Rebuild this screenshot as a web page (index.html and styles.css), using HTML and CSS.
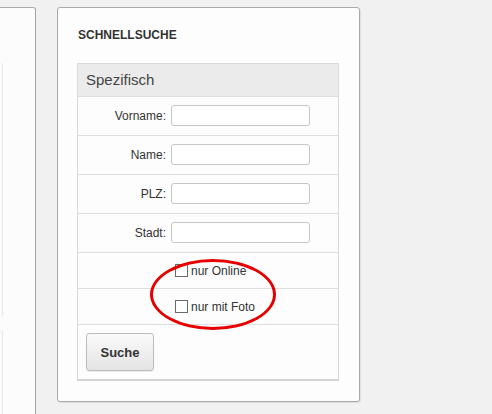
FILE: index.html
```html
<!DOCTYPE html>
<html lang="de">
<head>
<meta charset="utf-8">
<title>Schnellsuche</title>
<link rel="stylesheet" href="styles.css">
</head>
<body>
<div class="page">
  <aside class="side">
    <div class="side-box side-box-1"></div>
    <div class="side-box side-box-2"></div>
  </aside>
  <section class="panel">
    <h2 class="title">SCHNELLSUCHE</h2>
    <div class="table">
      <div class="thead">Spezifisch</div>
      <div class="row">
        <label class="lbl">Vorname:</label>
        <span class="input"></span>
      </div>
      <div class="row">
        <label class="lbl">Name:</label>
        <span class="input"></span>
      </div>
      <div class="row">
        <label class="lbl">PLZ:</label>
        <span class="input"></span>
      </div>
      <div class="row">
        <label class="lbl">Stadt:</label>
        <span class="input"></span>
      </div>
      <div class="row check-row">
        <span class="lbl"></span>
        <span class="check"><span class="box"></span>nur Online</span>
      </div>
      <div class="row check-row">
        <span class="lbl"></span>
        <span class="check"><span class="box"></span>nur mit Foto</span>
      </div>
      <div class="row btn-row">
        <button class="btn">Suche</button>
      </div>
    </div>
    <div class="mark"></div>
  </section>
</div>
</body>
</html>
```
FILE: styles.css
```css
html, body {
  margin: 0;
  padding: 0;
}
body {
  background: #f1f1f1;
  font-family: "Liberation Sans", Arial, sans-serif;
  color: #333;
  overflow: hidden;
}
.page {
  display: flex;
  align-items: flex-start;
  gap: 21px;
  padding-top: 7px;
  height: 414px;
  box-sizing: border-box;
}
.side {
  width: 36px;
  height: 420px;
  box-sizing: border-box;
  background: #fcfcfc;
  border-top: 1px solid #ababab;
  border-right: 1px solid #a3a3a3;
  border-top-right-radius: 3px;
  padding-top: 55px;
  display: flex;
  flex-direction: column;
  gap: 14px;
}
.side-box {
  width: 2px;
  border-right: 1px solid #e6e6e6;
  border-top-right-radius: 3px;
  border-bottom-right-radius: 3px;
}
.side-box-1 { height: 260px; }
.side-box-2 { height: 100px; }

.panel {
  position: relative;
  width: 303px;
  height: 395px;
  box-sizing: border-box;
  background: #fdfdfd;
  border: 1px solid #a9a9a9;
  border-radius: 3px;
  box-shadow: 1px 1px 1px rgba(0,0,0,0.08);
  padding: 20px 19px 0 19px;
}
.title {
  margin: 0 0 21px 1px;
  font-size: 12px;
  line-height: 14px;
  font-weight: bold;
  color: #333;
}
.table {
  width: 262px;
  box-sizing: border-box;
  border: 1px solid #d9d9d9;
  border-bottom: 2px solid #d4d4d4;
}
.thead {
  height: 32px;
  background: #ebebeb;
  padding-left: 8px;
  font-size: 15px;
  line-height: 32px;
  color: #444;
}
.row {
  display: flex;
  align-items: center;
  height: 38px;
  border-top: 1px solid #dedede;
}
.lbl {
  width: 88px;
  flex: none;
  text-align: right;
  font-size: 12px;
  color: #333;
  margin-right: 5px;
}
.input {
  display: block;
  width: 139px;
  height: 21px;
  box-sizing: border-box;
  background: #fff;
  border: 1px solid #c6c6c6;
  border-radius: 3px;
  margin-top: -1px;
}
.check-row {
  height: 35px;
}
.check {
  display: flex;
  align-items: center;
  font-size: 12px;
  color: #333;
}
.box {
  display: block;
  width: 13px;
  height: 13px;
  box-sizing: border-box;
  border: 1px solid #6a6a6a;
  background: #fff;
  margin: 0 3px 0 4px;
}
.btn-row {
  height: 54px;
  align-items: flex-start;
  padding-left: 8px;
}
.btn {
  margin-top: 8px;
  width: 68px;
  height: 38px;
  font-family: "Liberation Sans", Arial, sans-serif;
  font-size: 13px;
  font-weight: bold;
  color: #333;
  background: linear-gradient(#fafafa, #e4e4e4);
  border: 1px solid #bcbcbc;
  border-radius: 3px;
  box-shadow: 0 1px 1px rgba(0,0,0,0.08);
  padding: 0;
}
.mark {
  position: absolute;
  left: 92px;
  top: 251px;
  width: 126px;
  height: 71px;
  box-sizing: border-box;
  border: 3px solid #e60000;
  border-radius: 50%;
}
```
